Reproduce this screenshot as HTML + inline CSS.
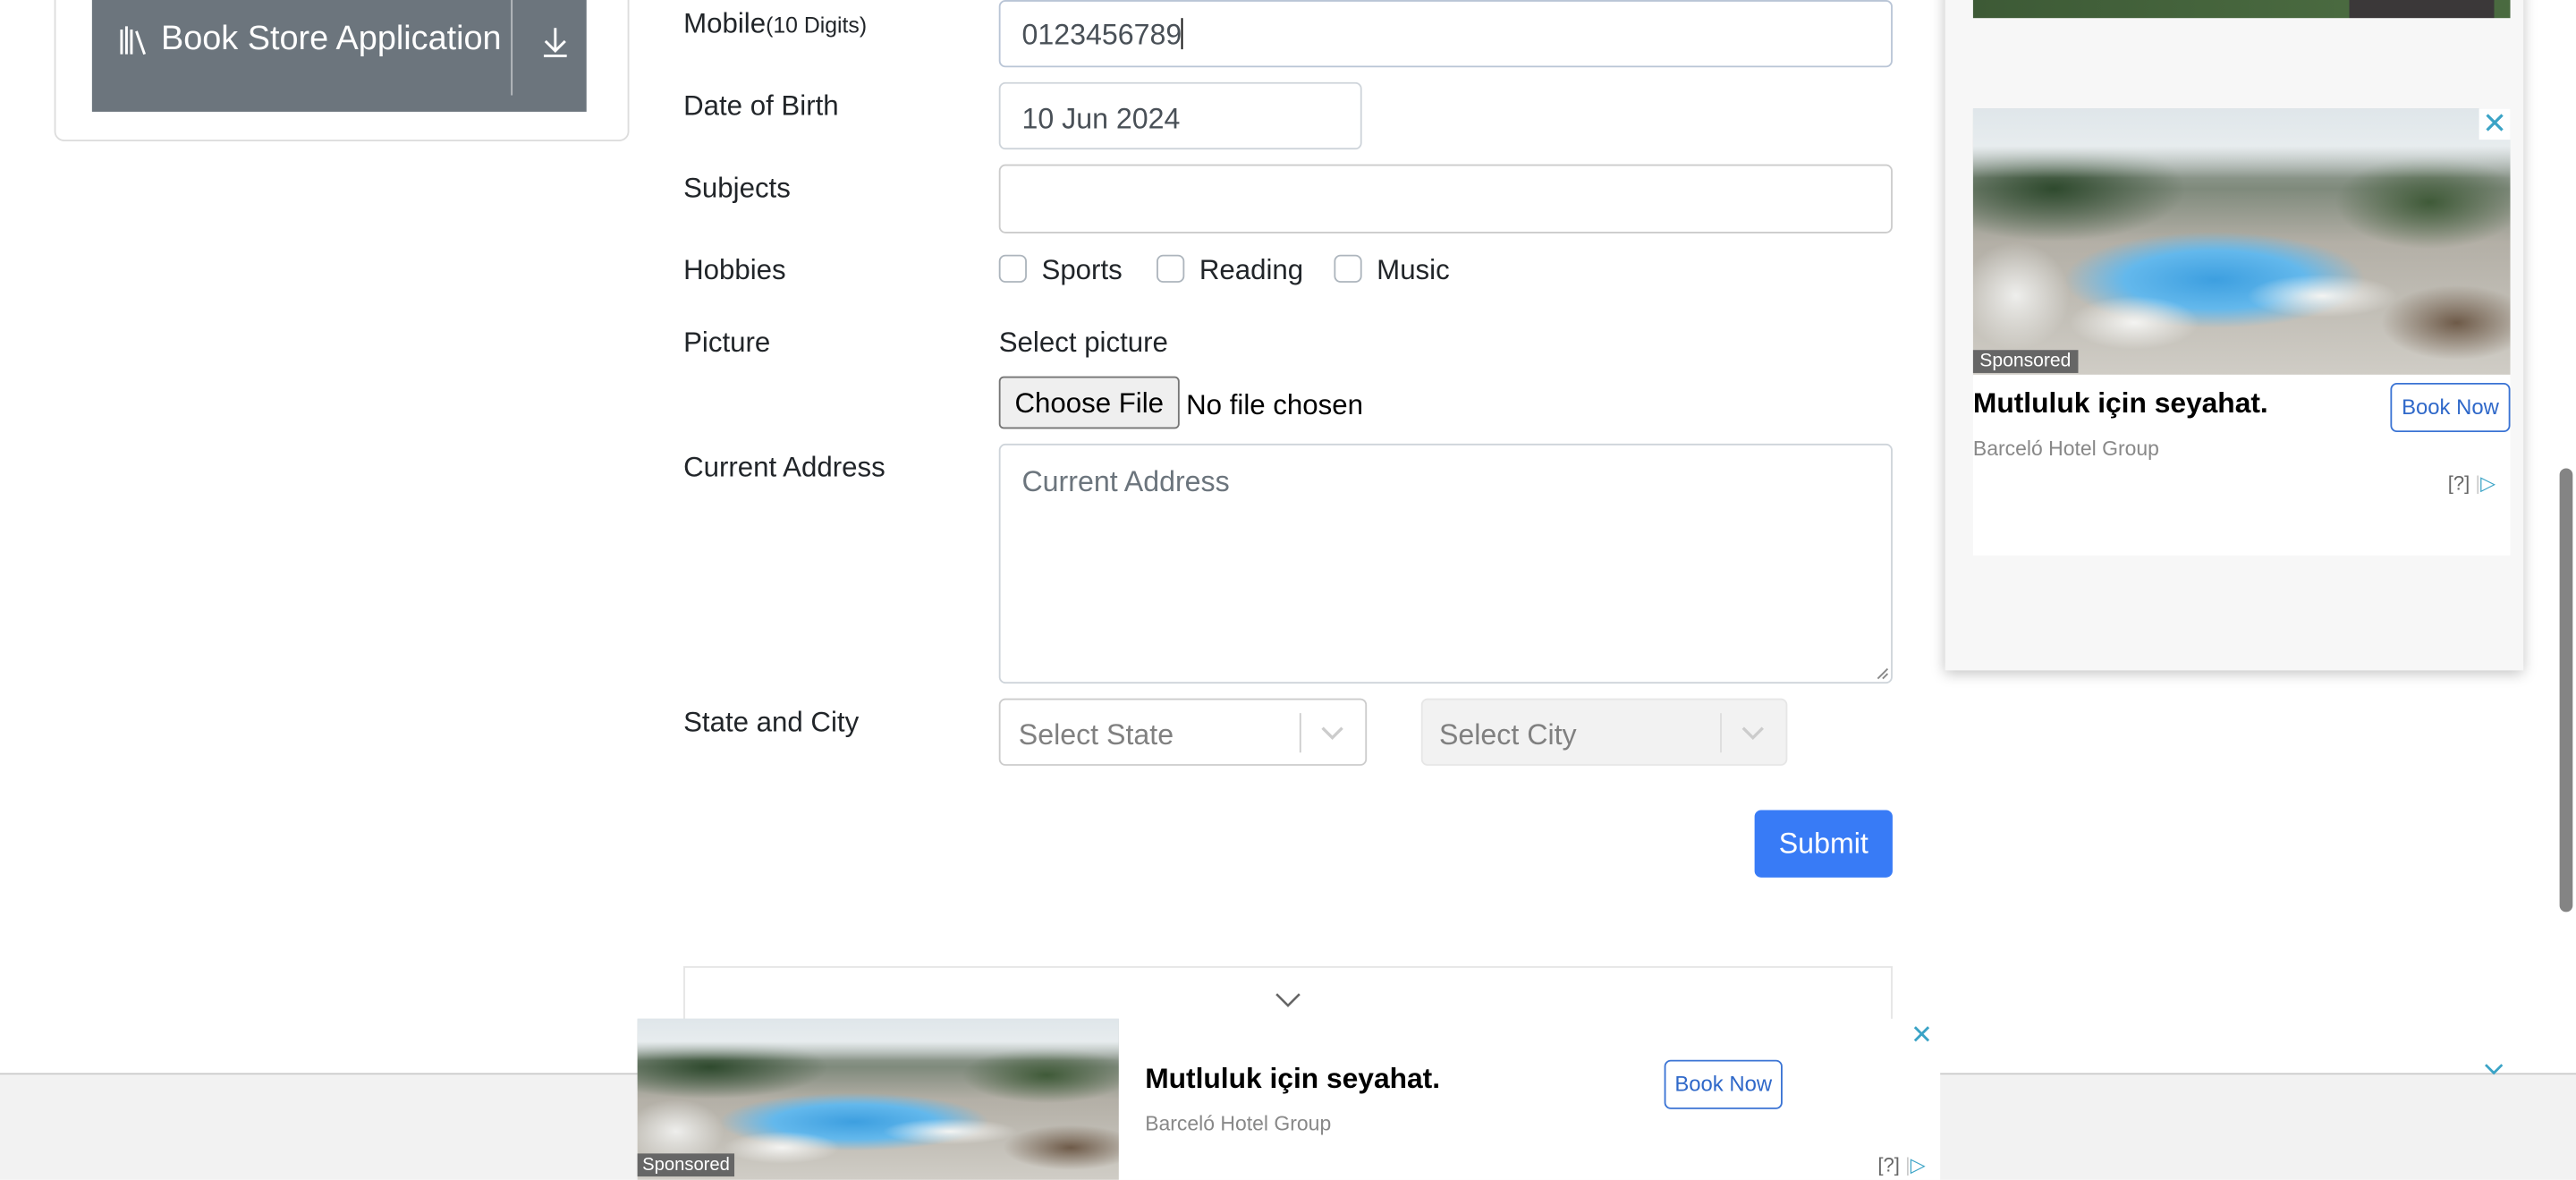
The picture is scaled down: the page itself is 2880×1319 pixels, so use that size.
<!DOCTYPE html>
<html><head><meta charset="utf-8">
<style>
*{box-sizing:border-box;margin:0;padding:0}
html,body{width:2880px;height:1318px;overflow:hidden;background:#fff}
#w{position:absolute;left:0;top:0;width:1568px;height:718px;transform:scale(1.83673);transform-origin:0 0;font-family:"Liberation Sans",sans-serif;color:#212529}
.a{position:absolute}
.lbl{font-size:17px;color:#212529}
.inp{border:1px solid #ced4da;border-radius:4px;background:#fff}
.ph{font-size:17.5px;color:#6c757d}
.cb{width:17px;height:17px;border:1px solid #adb5bd;border-radius:4px;background:#fff}
.img{background:
 linear-gradient(180deg,#dfe6ea 0%,#e7ecee 14%,transparent 26%),
 radial-gradient(ellipse 12% 10% at 30% 80%,#f4f4f2 0%,transparent 100%),
 radial-gradient(ellipse 14% 8% at 65% 70%,#f4f4f2 0%,transparent 100%),
 radial-gradient(ellipse 10% 20% at 8% 70%,#eeeeec 0%,transparent 100%),
 radial-gradient(ellipse 28% 18% at 45% 64%,#3d9fe0 0%,#63b8ec 60%,transparent 100%),
 radial-gradient(ellipse 35% 28% at 15% 30%,#2f4a2e 0%,transparent 70%),
 radial-gradient(ellipse 25% 25% at 85% 35%,#3f5a38 0%,transparent 70%),
 radial-gradient(ellipse 20% 20% at 90% 80%,#6e5a48 0%,transparent 70%),
 linear-gradient(180deg,#c9d1d4 0%,#7f8a7c 30%,#b3afa6 50%,#d0cdc6 100%)}
</style></head><body><div id="w">

<div class="a" style="left:33px;top:-10px;width:350px;height:96px;border:1px solid #ddd;border-radius:6px"></div>
<div class="a" style="left:56px;top:-10px;width:301px;height:78px;background:#6c757d"></div>
<div class="a" style="left:311px;top:0;width:1px;height:58px;background:#b8bcc0"></div>
<svg class="a" style="left:72px;top:14px" width="22" height="20" viewBox="0 0 22 20" fill="none" stroke="#fff" stroke-width="1.6"><path d="M2 4v15M5 2v17M8 4v15M11 5l5 14"/></svg>
<div class="a" style="left:98px;top:12px;font-size:20.6px;color:#fff">Book Store Application</div>
<svg class="a" style="left:329px;top:16px" width="18" height="20" viewBox="0 0 18 20" fill="none" stroke="#fff" stroke-width="1.6"><path d="M9 1v14M3 9l6 6 6-6M2 18h14"/></svg>

<div class="a lbl" style="left:416px;top:5px">Mobile<span style="font-size:13.5px">(10 Digits)</span></div>
<div class="a lbl" style="left:416px;top:55px">Date of Birth</div>
<div class="a lbl" style="left:416px;top:105px">Subjects</div>
<div class="a lbl" style="left:416px;top:155px">Hobbies</div>
<div class="a lbl" style="left:416px;top:199px">Picture</div>
<div class="a lbl" style="left:416px;top:275px">Current Address</div>
<div class="a lbl" style="left:416px;top:430px">State and City</div>

<div class="a inp" style="left:608px;top:0;width:544px;height:41px;border-color:#b9c5d6"></div>
<div class="a" style="left:622px;top:11px;font-size:17.5px;color:#495057">0123456789<span style="display:inline-block;width:1px;height:19px;background:#000;vertical-align:-3px"></span></div>
<div class="a inp" style="left:608px;top:50px;width:221px;height:41px"></div>
<div class="a" style="left:622px;top:62px;font-size:17.5px;color:#495057">10 Jun 2024</div>
<div class="a inp" style="left:608px;top:100px;width:544px;height:42px;border-color:#ccc"></div>

<div class="a cb" style="left:608px;top:155px"></div>
<div class="a lbl" style="left:634px;top:155px">Sports</div>
<div class="a cb" style="left:704px;top:155px"></div>
<div class="a lbl" style="left:730px;top:155px">Reading</div>
<div class="a cb" style="left:812px;top:155px"></div>
<div class="a lbl" style="left:838px;top:155px">Music</div>

<div class="a lbl" style="left:608px;top:199px">Select picture</div>
<div class="a" style="left:608px;top:229px;width:110px;height:32px;border:1px solid #767676;border-radius:3px;background:#efefef;font-size:17px;color:#000;text-align:center;line-height:31px">Choose File</div>
<div class="a" style="left:722px;top:237px;font-size:17px;color:#000">No file chosen</div>

<div class="a inp" style="left:608px;top:270px;width:544px;height:146px"></div>
<div class="a ph" style="left:622px;top:283px">Current Address</div>
<svg class="a" style="left:1142px;top:406px" width="8" height="8"><path d="M1 7L7 1M4 7L7 4" stroke="#888"/></svg>

<div class="a" style="left:608px;top:425px;width:224px;height:41px;border:1px solid #ccc;border-radius:4px;background:#fff"></div>
<div class="a" style="left:620px;top:437px;font-size:17.5px;color:#808080">Select State</div>
<div class="a" style="left:791px;top:434px;width:1px;height:24px;background:#ccc"></div>
<svg class="a" style="left:804px;top:441px" width="14" height="10"><path d="M1 2l6 6 6-6" fill="none" stroke="#ccc" stroke-width="1.8"/></svg>
<div class="a" style="left:865px;top:425px;width:223px;height:41px;border:1px solid #e6e6e6;border-radius:4px;background:#f2f2f2"></div>
<div class="a" style="left:876px;top:437px;font-size:17.5px;color:#808080">Select City</div>
<div class="a" style="left:1047px;top:434px;width:1px;height:24px;background:#ddd"></div>
<svg class="a" style="left:1060px;top:441px" width="14" height="10"><path d="M1 2l6 6 6-6" fill="none" stroke="#ccc" stroke-width="1.8"/></svg>

<div class="a" style="left:1068px;top:493px;width:84px;height:41px;background:#387bf6;border-radius:4px;color:#fff;font-size:17.5px;text-align:center;line-height:41px">Submit</div>

<div class="a" style="left:416px;top:588px;width:736px;height:60px;border:1px solid #e5e5e5;border-bottom:none"></div>
<svg class="a" style="left:776px;top:604px" width="16" height="10"><path d="M1 1l7 7 7-7" fill="none" stroke="#666" stroke-width="1.4"/></svg>

<div class="a" style="left:1184px;top:-10px;width:352px;height:418px;background:#f7f7f7;box-shadow:0 2px 8px rgba(0,0,0,.25)"></div>
<div class="a" style="left:1201px;top:0;width:327px;height:11px;background:linear-gradient(90deg,#3d5a36 0,#4a6a40 70%,#3b3839 70%,#3b3839 97%,#4a6a40 97%)"></div>
<div class="a img" style="left:1201px;top:66px;width:327px;height:163px"></div>
<div class="a" style="left:1201px;top:228px;width:327px;height:110px;background:#fff"></div>
<div class="a" style="left:1509px;top:66px;width:19px;height:19px;background:#fff;color:#3aa3c6;font-size:18px;text-align:center;line-height:18px">✕</div>
<div class="a" style="left:1201px;top:213px;background:#666;color:#fff;font-size:11.5px;padding:1px 4px">Sponsored</div>
<div class="a" style="left:1201px;top:235px;font-size:17.3px;font-weight:bold;color:#000">Mutluluk için seyahat.</div>
<div class="a" style="left:1455px;top:233px;width:73px;height:30px;border:1.5px solid #3a73d4;border-radius:4px;color:#2f68c9;font-size:13px;text-align:center;line-height:27px">Book Now</div>
<div class="a" style="left:1201px;top:266px;font-size:12.5px;color:#888">Barceló Hotel Group</div>
<div class="a" style="left:1490px;top:287px;font-size:12px;color:#666">[?] <span style="color:#ccc">|</span><span style="color:#3aa3c6">▷</span></div>

<div class="a" style="left:1558px;top:285px;width:8px;height:270px;background:#848484;border-radius:4px"></div>

<div class="a" style="left:0;top:653px;width:1568px;height:65px;background:#f2f2f2;border-top:1px solid #ccc"></div>
<svg class="a" style="left:1512px;top:647px" width="12" height="8"><path d="M1 1l5 5 5-5" fill="none" stroke="#3aa3c6" stroke-width="1.5"/></svg>
<div class="a" style="left:388px;top:620px;width:793px;height:98px;background:#fff"></div>
<div class="a img" style="left:388px;top:620px;width:293px;height:98px"></div>
<div class="a" style="left:388px;top:702px;background:#666;color:#fff;font-size:11px;padding:1px 3px">Sponsored</div>
<div class="a" style="left:697px;top:646px;font-size:17.3px;font-weight:bold;color:#000">Mutluluk için seyahat.</div>
<div class="a" style="left:1013px;top:645px;width:72px;height:30px;border:1.5px solid #3a73d4;border-radius:4px;color:#2f68c9;font-size:13px;text-align:center;line-height:27px">Book Now</div>
<div class="a" style="left:697px;top:677px;font-size:12.5px;color:#888">Barceló Hotel Group</div>
<div class="a" style="left:1163px;top:620px;color:#3aa3c6;font-size:16px">✕</div>
<div class="a" style="left:1143px;top:702px;font-size:12px;color:#666">[?] <span style="color:#ccc">|</span><span style="color:#3aa3c6">▷</span></div>

</div></body></html>
